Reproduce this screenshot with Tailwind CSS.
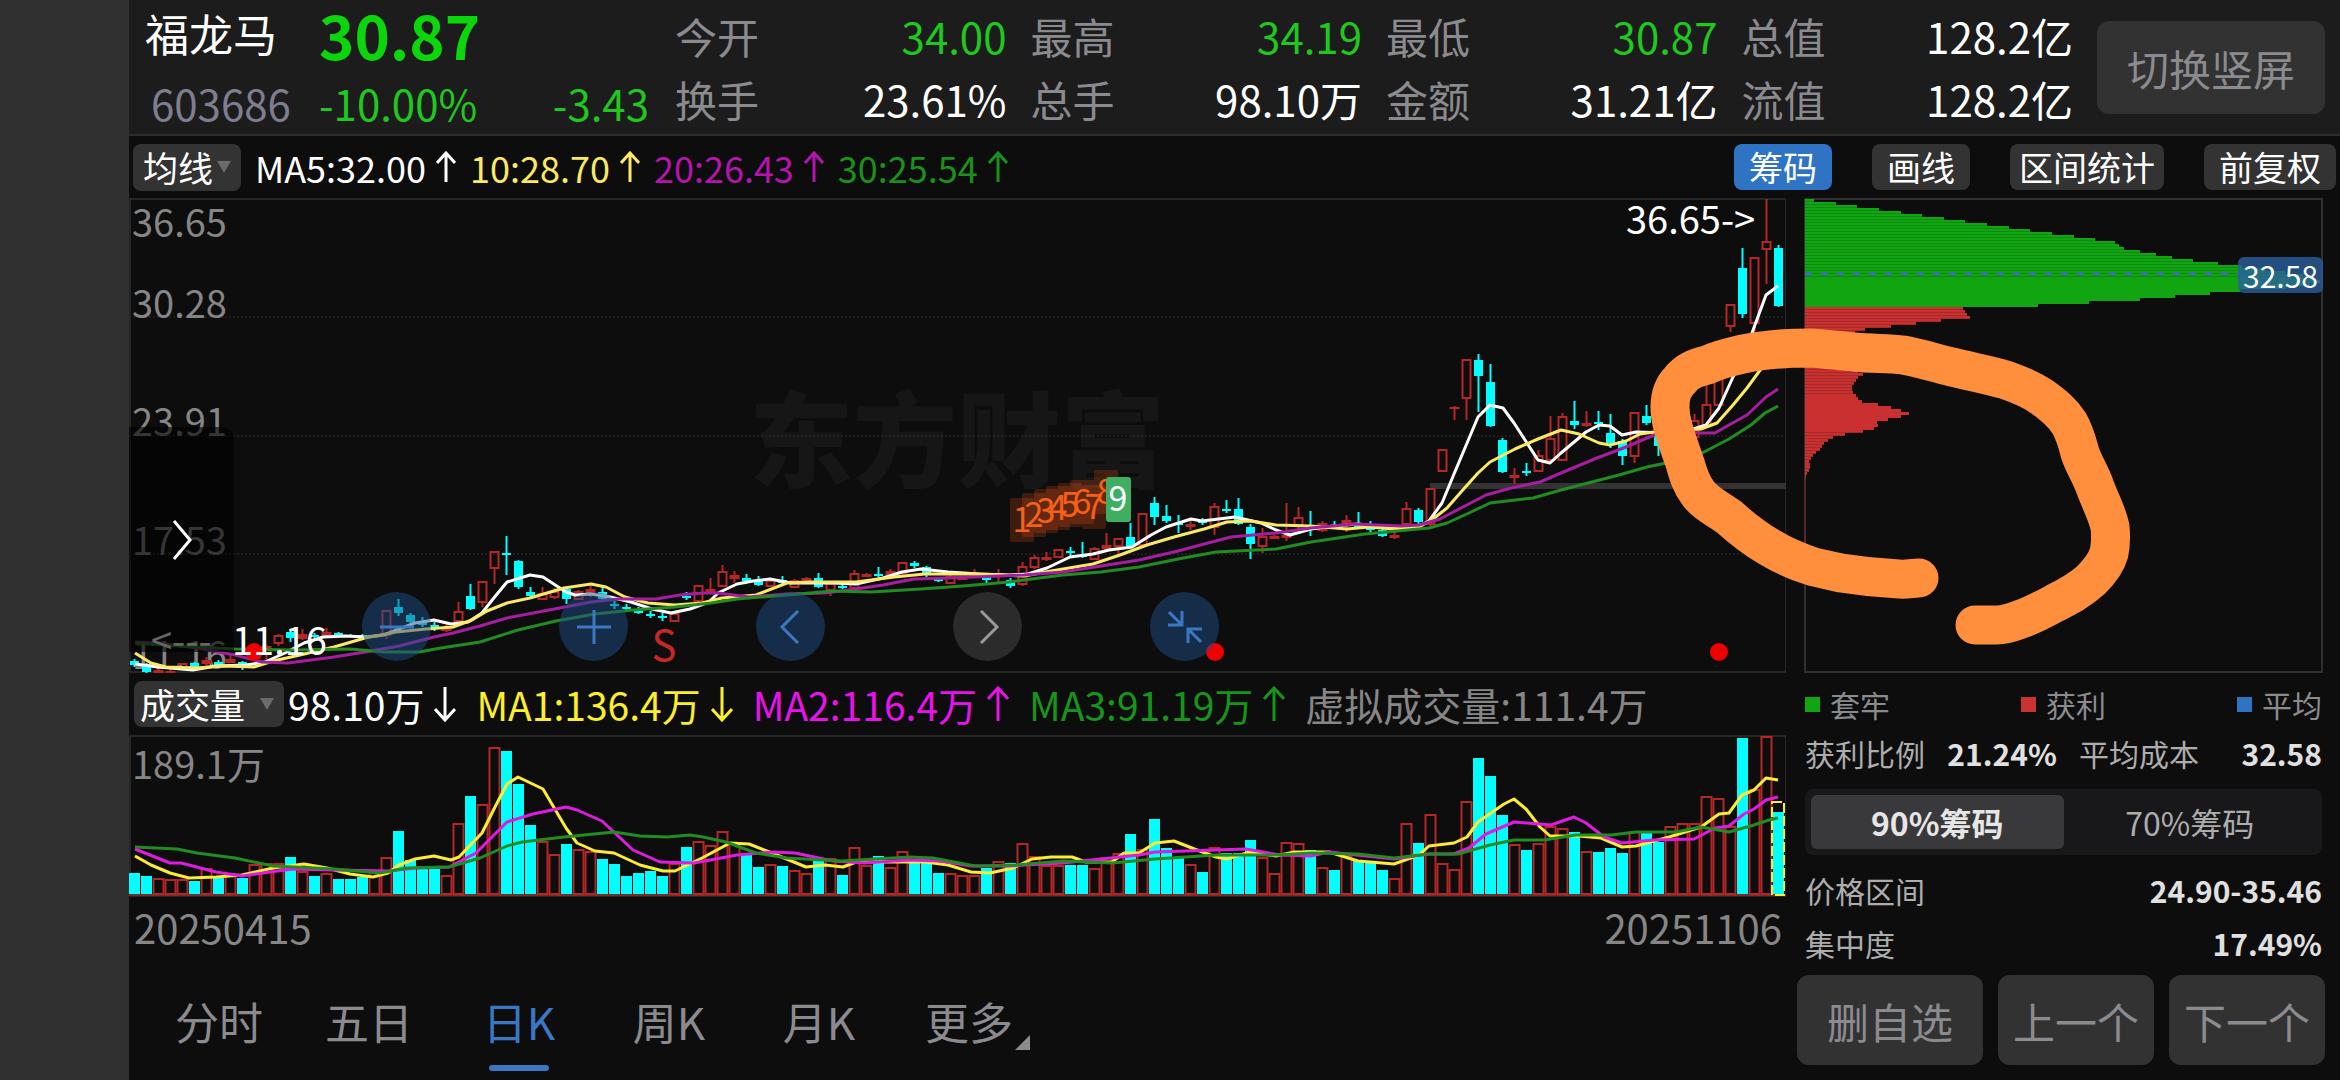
<!DOCTYPE html>
<html lang="zh-CN">
<head>
<meta charset="utf-8">
<meta name="viewport" content="width=device-width, initial-scale=1">
<title>福龙马 603686</title>
<script src="https://cdn.jsdelivr.net/npm/@tailwindcss/browser@4"></script>
</head>
<body class="bg-[#0d0d0d] font-['Noto_Sans_CJK_SC',sans-serif] text-white">
<div class="flex min-h-screen">
  <aside class="w-[129px] shrink-0 bg-[#303030]"></aside>
  <div class="flex min-w-0 flex-1 flex-col">

    <header class="flex h-[136px] items-center border-b-2 border-[#2c2c2c] bg-[#1c1c1c] pr-[15px] pl-4 whitespace-nowrap">
      <div class="grid w-[504px] shrink-0 grid-cols-[174px_1fr_auto] gap-y-1">
        <h1 class="text-[44px] leading-[66px]">福龙马</h1>
        <strong class="col-span-2 text-[60px] leading-[68px] font-bold text-[#0bd60b]">30.87</strong>
        <span class="pl-1.5 text-[42px] leading-[62px] text-[#7e7e90]">603686</span>
        <span class="text-[42px] leading-[62px] text-[#1fc71f]">-10.00%</span>
        <span class="text-[42px] leading-[62px] text-[#1fc71f]">-3.43</span>
      </div>
      <dl class="ml-[26px] grid flex-1 grid-cols-4 gap-x-6 text-[42px] leading-[63px]">
        <div class="flex justify-between"><dt class="text-[#8b8b8f]">今开</dt><dd class="text-[#1fc71f]">34.00</dd></div>
        <div class="flex justify-between"><dt class="text-[#8b8b8f]">最高</dt><dd class="text-[#1fc71f]">34.19</dd></div>
        <div class="flex justify-between"><dt class="text-[#8b8b8f]">最低</dt><dd class="text-[#1fc71f]">30.87</dd></div>
        <div class="flex justify-between"><dt class="text-[#8b8b8f]">总值</dt><dd>128.2亿</dd></div>
        <div class="flex justify-between"><dt class="text-[#8b8b8f]">换手</dt><dd>23.61%</dd></div>
        <div class="flex justify-between"><dt class="text-[#8b8b8f]">总手</dt><dd>98.10万</dd></div>
        <div class="flex justify-between"><dt class="text-[#8b8b8f]">金额</dt><dd>31.21亿</dd></div>
        <div class="flex justify-between"><dt class="text-[#8b8b8f]">流值</dt><dd>128.2亿</dd></div>
      </dl>
      <button class="ml-6 h-[93px] w-[228px] shrink-0 rounded-xl bg-[#323232] text-[42px] text-[#8b8b8f]">切换竖屏</button>
    </header>

    <div class="flex h-[62px] items-center pr-1 pl-1 text-[36px] leading-[46px] whitespace-nowrap">
      <button class="flex h-[47px] w-[108px] items-center gap-1 rounded-lg bg-[#333] pl-2.5 text-[35px]">均线
        <svg class="h-3 w-3.5 shrink-0" viewBox="0 0 14 12"><path d="M0 0h14L7 12z" fill="#6a6a6a"/></svg></button>
      <ul class="ml-3.5 flex gap-3.5">
        <li class="flex items-center gap-2.5">MA5:32.00<svg class="h-8 w-5" viewBox="0 0 20 32" fill="none" stroke="currentColor" stroke-width="3"><path d="M10 31V3M1 12l9-10 9 10"/></svg></li>
        <li class="flex items-center gap-2.5 text-[#fbe965]">10:28.70<svg class="h-8 w-5" viewBox="0 0 20 32" fill="none" stroke="currentColor" stroke-width="3"><path d="M10 31V3M1 12l9-10 9 10"/></svg></li>
        <li class="flex items-center gap-2.5 text-[#b514ad]">20:26.43<svg class="h-8 w-5" viewBox="0 0 20 32" fill="none" stroke="currentColor" stroke-width="3"><path d="M10 31V3M1 12l9-10 9 10"/></svg></li>
        <li class="flex items-center gap-2.5 text-[#1b901b]">30:25.54<svg class="h-8 w-5" viewBox="0 0 20 32" fill="none" stroke="currentColor" stroke-width="3"><path d="M10 31V3M1 12l9-10 9 10"/></svg></li>
      </ul>
      <div class="ml-auto flex gap-10 text-[34px] leading-[46px]">
        <button class="rounded-lg bg-[#2f74c4] px-[15px]">筹码</button>
        <button class="rounded-lg bg-[#333] px-[15px]">画线</button>
        <button class="rounded-lg bg-[#333] px-[9px]">区间统计</button>
        <button class="rounded-lg bg-[#333] px-[15px]">前复权</button>
      </div>
    </div>

    <div class="relative flex flex-1">
      <main class="min-w-0 flex-1">
        <section class="relative">
          <svg id="price" class="block h-[475px] w-full" aria-label="日K"></svg>
          <button class="absolute top-[229px] left-0 flex h-[225px] w-[105px] items-center justify-center rounded-tr-xl bg-black/60" aria-label="展开">
            <svg class="h-[42px] w-5" viewBox="0 0 20 42" fill="none" stroke="#fff" stroke-width="3"><path d="M2 2l16 19L2 40"/></svg>
          </button>
          <div class="absolute top-[394px] left-[233px] flex gap-32">
            <button class="flex size-[69px] items-center justify-center rounded-full bg-[#1f4d86]/50" aria-label="缩小"><svg class="size-9" viewBox="0 0 36 36" stroke="#3a78c4" stroke-width="3"><path d="M1 18h34"/></svg></button>
            <button class="flex size-[69px] items-center justify-center rounded-full bg-[#1f4d86]/50" aria-label="放大"><svg class="size-9" viewBox="0 0 36 36" stroke="#3a78c4" stroke-width="3"><path d="M1 18h34M18 1v34"/></svg></button>
            <button class="flex size-[69px] items-center justify-center rounded-full bg-[#1f4d86]/50" aria-label="左移"><svg class="size-9" viewBox="0 0 36 36" fill="none" stroke="#3a78c4" stroke-width="3"><path d="M25 2L9 18l16 16"/></svg></button>
            <button class="flex size-[69px] items-center justify-center rounded-full bg-[#2b2b2b]" aria-label="右移"><svg class="size-9" viewBox="0 0 36 36" fill="none" stroke="#999" stroke-width="3"><path d="M11 2l16 16-16 16"/></svg></button>
            <button class="flex size-[69px] items-center justify-center rounded-full bg-[#1f4d86]/50" aria-label="收起"><svg class="size-9" viewBox="0 0 36 36" fill="none" stroke="#3a78c4" stroke-width="3"><path d="M2 3l13 13M15 2v14H1M34 33L21 20M21 34V20h14"/></svg></button>
          </div>
        </section>

        <div class="flex h-[62px] items-center pl-[5px] text-[39px] leading-[46px] whitespace-nowrap">
          <button class="flex h-[46px] w-[150px] items-center justify-between rounded-lg bg-[#333] pr-2.5 pl-1.5 text-[35px]">成交量
            <svg class="h-3 w-3.5 shrink-0" viewBox="0 0 14 12"><path d="M0 0h14L7 12z" fill="#6a6a6a"/></svg></button>
          <ul class="ml-1 flex gap-5">
            <li class="flex items-center gap-2.5">98.10万<svg class="h-9 w-[22px]" viewBox="0 0 22 36" fill="none" stroke="currentColor" stroke-width="3"><path d="M11 1v32M1 23l10 11 10-11"/></svg></li>
            <li class="flex items-center gap-2.5 text-[#fbee2d]">MA1:136.4万<svg class="h-9 w-[22px]" viewBox="0 0 22 36" fill="none" stroke="currentColor" stroke-width="3"><path d="M11 1v32M1 23l10 11 10-11"/></svg></li>
            <li class="flex items-center gap-2.5 text-[#ea12ea]">MA2:116.4万<svg class="h-9 w-[22px]" viewBox="0 0 22 36" fill="none" stroke="currentColor" stroke-width="3"><path d="M11 35V3M1 13L11 2l10 11"/></svg></li>
            <li class="flex items-center gap-2.5 text-[#17951a]">MA3:91.19万<svg class="h-9 w-[22px]" viewBox="0 0 22 36" fill="none" stroke="currentColor" stroke-width="3"><path d="M11 35V3M1 13L11 2l10 11"/></svg></li>
            <li class="text-[#868686]">虚拟成交量:111.4万</li>
          </ul>
        </div>

        <svg id="volume" class="block h-[162px] w-full" aria-label="成交量"></svg>

        <div class="flex h-[60px] items-center justify-between pr-1 pl-[5px] text-[40px] text-[#868686]">
          <time>20250415</time><time>20251106</time>
        </div>

        <nav class="flex h-[123px] pl-[15px] text-[44px] leading-[66px] text-[#8b8b8f]">
          <a href="#" class="flex w-[150px] justify-center pt-[31px]">分时</a>
          <a href="#" class="flex w-[150px] justify-center pt-[31px]">五日</a>
          <a href="#" class="flex w-[150px] flex-col items-center pt-[31px] text-[#3a78c4]" aria-current="page">日K<span class="mt-[11px] h-1.5 w-[60px] rounded-full bg-[#3a78c4]"></span></a>
          <a href="#" class="flex w-[150px] justify-center pt-[31px]">周K</a>
          <a href="#" class="flex w-[150px] justify-center pt-[31px]">月K</a>
          <a href="#" class="relative flex w-[150px] justify-center pt-[31px]">更多<svg class="absolute right-3.5 bottom-[30px] size-[15px]" viewBox="0 0 15 15"><path d="M15 0v15H0z" fill="#8b8b8f"/></svg></a>
        </nav>
      </main>

      <aside class="flex w-[554px] shrink-0 flex-col text-[30px] text-[#adadad]">
        <div class="relative mr-[17px] ml-[18px]">
          <svg id="chips" class="block h-[475px] w-full" aria-label="筹码分布"></svg>
          <span class="absolute top-[59px] right-0 rounded-md bg-[#2a5f9e]/80 px-[5px] text-[30px] leading-9 text-white">32.58</span>
        </div>
        <div class="flex h-[62px] items-center justify-between pr-[18px] pl-[19px] text-[#8b8b8f]">
          <span class="flex items-center gap-2.5"><i class="size-[15px] bg-[#11a611]"></i>套牢</span>
          <span class="flex items-center gap-2.5"><i class="size-[15px] bg-[#cb3232]"></i>获利</span>
          <span class="flex items-center gap-2.5"><i class="size-[15px] bg-[#2f74c4]"></i>平均</span>
        </div>
        <div class="flex h-9 items-center justify-between pr-[18px] pl-[19px]">
          <span>获利比例</span><b class="font-bold text-[#e0e0e0]">21.24%</b><span>平均成本</span><b class="ml-5 font-bold text-[#e0e0e0]">32.58</b>
        </div>
        <div class="mt-[18px] mr-[18px] ml-[19px] grid grid-cols-2 rounded-lg bg-[#18181a] p-1.5 text-[32px] leading-[54px]">
          <button class="rounded-md bg-[#39393b] font-bold text-[#e6e6e6]">90%筹码</button>
          <button>70%筹码</button>
        </div>
        <div class="mt-[9px] flex h-[53px] items-center justify-between pr-[18px] pl-[19px]"><span>价格区间</span><b class="font-bold text-[#e0e0e0]">24.90-35.46</b></div>
        <div class="flex h-[53px] items-center justify-between pr-[18px] pl-[19px]"><span>集中度</span><b class="font-bold text-[#e0e0e0]">17.49%</b></div>
        <div class="mt-[5px] grid h-[90px] grid-cols-[186px_1fr_1fr] gap-[15px] pr-[15px] pl-[11px] text-[42px] text-[#8b8b8f]">
          <button class="rounded-xl bg-[#323232]">删自选</button>
          <button class="rounded-xl bg-[#323232]">上一个</button>
          <button class="rounded-xl bg-[#323232]">下一个</button>
        </div>
      </aside>

      <svg class="pointer-events-none absolute top-0 right-0 h-[475px] w-[740px]" viewBox="1600 198 740 475" fill="none" stroke="#ff8f3c" stroke-width="39" stroke-linecap="round" stroke-linejoin="round">
        <path d="M1919 578C1912 578 1906 580 1899 579C1878 578 1860 576 1841 573C1830 571 1824 569 1814 567C1798 562 1784 556 1769 547C1752 537 1740 527 1729 517C1716 508 1705 503 1698 493C1691 484 1688 474 1685 463C1680 449 1676 438 1673 427C1671 420 1670 414 1670 407C1670 396 1672 388 1680 380C1687 371 1695 368 1707 365C1720 359 1730 357 1743 354C1766 349 1788 348 1810 348C1826 349 1840 351 1854 352C1872 354 1888 353 1903 355C1920 358 1935 363 1952 367C1972 372 1990 375 2006 380C2020 385 2032 390 2042 397C2053 405 2062 412 2069 423C2075 433 2077 442 2080 453C2084 465 2091 475 2095 487C2101 503 2107 513 2110 527C2111 537 2111 544 2109 553C2106 564 2099 572 2091 580C2079 591 2067 597 2055 603C2044 609 2035 614 2024 618C2015 621 2008 625 1997 625H1975"/>
      </svg>
    </div>
  </div>
</div>

<script>
const UP = '#b52626', DOWN = '#00ffff';
const FONT = "'Noto Sans CJK SC',sans-serif";

// direction, high, open/close top, open/close bottom, low; one entry per trading day
const candles = [
['c',659,661,665,667],['c',663,664,672,673],['r',669,670,672,673],['r',669,671,672,673],['r',663,664,669,670],['c',662,663,667,668],['r',657,660,663,666],['c',660,662,665,667],['r',655,659,662,663],['c',661,662,668,670],
['r',650,652,657,658],['r',645,647,653,660],['r',634,636,643,646],['c',630,632,638,642],['r',629,634,638,640],['c',633,635,637,638],['r',628,632,635,637],['c',632,633,635,636],['c',634,635,636,637],['c',634,635,637,638],
['r',634,635,637,638],['r',610,611,635,639],['c',599,607,613,616],['c',613,615,622,624],['c',617,621,625,627],['c',622,625,629,631],['r',622,627,630,632],['r',602,612,621,625],['c',584,596,609,610],['r',581,582,602,607],
['r',551,552,568,584],['c',536,553,555,575],['c',560,561,587,589],['c',587,592,596,598],['r',587,594,599,600],['r',588,592,597,599],['c',587,589,599,604],['r',590,592,599,600],['r',586,589,592,597],['c',585,592,599,601],
['c',601,604,606,609],['c',604,607,609,611],['c',607,609,613,614],['c',611,614,616,618],['c',613,616,618,621],['r',613,614,621,622],['c',592,596,598,600],['r',585,586,601,602],['r',578,589,592,593],['r',565,572,586,587],
['r',571,575,578,583],['c',574,578,581,583],['c',576,580,585,586],['r',580,581,586,587],['c',576,580,583,584],['r',579,581,587,588],['r',577,578,580,583],['c',573,578,587,588],['r',583,584,590,596],['c',583,586,588,589],
['r',570,574,588,589],['r',573,574,576,577],['c',567,574,575,577],['r',569,571,574,576],['r',562,563,573,575],['c',561,563,566,568],['c',566,567,575,577],['c',577,579,581,582],['r',575,577,583,584],['r',576,577,579,580],
['r',569,573,575,576],['c',575,577,580,583],['r',569,573,576,582],['c',578,580,586,588],['r',562,567,584,586],['r',555,558,567,569],['r',552,557,559,561],['r',549,550,557,558],['c',547,551,553,556],['c',542,555,557,558],
['r',547,549,559,560],['r',533,545,548,552],['r',538,539,546,556],['c',523,537,546,547],['r',513,514,545,546],['c',497,503,517,525],['c',505,516,521,523],['c',515,523,525,533],['r',520,524,526,530],['c',518,521,522,525],
['r',503,507,527,535],['c',500,509,511,513],['c',498,509,524,525],['c',524,527,544,559],['r',528,537,546,553],['r',535,536,538,539],['r',503,535,537,541],['r',507,518,525,532],['c',511,526,528,536],['r',521,524,530,532],
['c',521,525,526,528],['r',515,520,522,532],['c',512,525,526,528],['c',521,528,530,532],['c',528,530,536,537],['r',532,535,537,539],['r',502,509,524,525],['c',508,510,522,524],['r',488,489,524,526],['r',449,450,471,472],
['r',406,407,408,420],['r',359,360,398,420],['c',354,360,376,412],['c',364,382,426,427],['c',438,440,472,473],['r',468,475,477,484],['c',463,471,473,476],['r',450,456,471,472],['r',416,439,460,461],['r',413,417,460,461],
['c',401,421,425,429],['r',411,423,425,427],['c',411,422,424,430],['c',414,433,443,448],['c',439,441,456,465],['r',412,413,456,463],['c',405,416,423,425],['c',426,430,446,456],['r',421,425,446,450],['r',424,428,439,446],
['r',414,421,437,439],['r',385,405,426,428],['r',366,370,405,406],['r',304,305,326,332],['c',248,268,314,318],['r',257,258,323,335],['r',199,242,249,284],['c',245,248,306,307]];

// bar heights in px, same order as the candles
const volumes = [21,18,16,15,15,13,26,16,21,16,30,31,31,37,23,18,21,15,15,17,23,37,63,34,26,25,19,71,98,90,147,143,110,69,53,40,50,45,43,35,30,18,21,23,18,31,47,53,49,63,51,39,27,30,28,24,21,36,36,19,47,29,38,27,43,31,32,21,21,19,19,26,33,31,51,38,29,29,29,29,26,37,41,60,45,75,46,36,30,22,47,41,41,54,37,21,52,51,44,27,24,39,33,33,24,16,71,51,80,31,25,93,136,118,79,50,44,51,68,66,62,43,42,46,41,63,61,52,68,71,71,98,96,68,156,105,158,82];

const maPrice = {
'#ffffff': '135,664 158,667 193,670 216,666 246,665 265,662 285,653 304,643 323,637 346,636 365,637 384,635 399,629 415,623 434,620 451,624 468,622 482,613 493,599 507,582 530,575 543,577 566,592 575,595 591,594 610,597 631,602 652,609 671,613 690,609 709,602 718,593 737,584 753,581 770,579 791,583 814,583 833,583 856,584 883,578 902,572 921,569 948,572 979,574 1009,575 1028,574 1047,568 1070,557 1093,554 1109,550 1132,547 1151,535 1166,527 1191,519 1202,521 1235,517 1261,523 1276,530 1290,535 1311,529 1333,526 1358,524 1394,528 1419,526 1429,521 1442,503 1454,474 1478,417 1490,405 1503,408 1514,423 1538,460 1550,463 1561,453 1586,432 1599,425 1610,426 1622,435 1636,432 1669,433 1690,430 1706,425 1719,408 1733,377 1744,357 1752,333 1766,295 1778,286',
'#fbe967': '135,653 151,663 166,667 197,668 223,666 254,667 273,661 300,655 334,647 365,638 396,632 426,629 453,627 472,620 487,611 507,603 530,598 564,588 591,584 606,587 625,597 648,603 675,605 702,603 722,598 756,595 787,583 810,582 856,582 894,577 925,574 979,574 1024,576 1051,571 1093,564 1120,555 1147,545 1174,537 1204,529 1227,522 1251,521 1276,525 1311,526 1347,529 1369,527 1394,529 1419,527 1433,519 1447,508 1461,492 1478,473 1490,462 1515,449 1538,439 1561,430 1579,434 1599,443 1610,445 1626,441 1640,434 1661,431 1701,429 1717,423 1733,405 1747,388 1758,373 1775,350',
'#a51ea0': '135,642 158,643 197,648 235,655 262,662 288,663 334,657 365,652 399,646 434,637 453,633 480,626 507,618 549,610 591,602 618,599 656,599 680,595 702,593 718,593 749,597 787,594 825,593 856,589 883,585 914,579 948,578 1024,575 1063,572 1101,566 1139,560 1178,551 1208,543 1231,537 1276,533 1311,528 1354,524 1401,526 1419,525 1440,519 1461,508 1486,495 1511,488 1540,482 1561,473 1597,458 1626,447 1654,435 1679,431 1701,433 1715,433 1729,425 1747,415 1766,397 1778,389',
'#228b22': '135,643 177,646 235,649 292,650 350,649 384,652 419,652 441,648 480,642 518,630 556,621 595,614 633,610 675,607 711,603 737,599 787,595 833,591 871,592 921,589 963,586 1009,582 1063,575 1101,572 1139,567 1178,559 1216,552 1276,549 1311,542 1365,534 1429,528 1447,523 1469,513 1490,503 1533,498 1561,490 1619,475 1647,467 1676,461 1704,452 1729,439 1751,425 1765,413 1778,406'};
const maVolume = {
'#fdec35': '135,856 151,865 170,873 189,878 216,877 242,875 273,868 304,864 327,868 350,874 373,877 388,873 399,865 415,859 434,856 451,860 459,857 482,833 495,807 507,784 518,777 543,789 566,828 577,843 595,851 614,853 640,865 663,871 675,871 702,858 730,843 749,844 772,853 806,867 825,865 843,867 856,862 894,862 925,862 948,865 971,872 990,873 1013,868 1032,859 1051,857 1072,857 1086,862 1112,862 1124,853 1139,853 1155,843 1174,841 1197,850 1216,857 1227,859 1250,852 1276,856 1294,852 1329,852 1358,861 1394,864 1419,855 1429,846 1454,843 1467,837 1478,822 1504,804 1514,799 1526,809 1540,827 1550,836 1579,836 1601,838 1622,847 1636,846 1669,837 1701,827 1719,814 1729,813 1742,795 1754,790 1766,778 1778,780',
'#e01be0': '135,849 170,863 181,863 216,872 242,876 292,869 334,870 388,871 415,868 449,867 476,853 507,822 533,814 566,807 577,810 602,821 633,850 660,862 694,863 737,855 772,852 795,853 833,861 864,863 910,860 940,861 971,866 1009,866 1063,863 1101,859 1139,855 1155,852 1246,849 1280,855 1311,856 1329,852 1394,859 1429,854 1454,854 1469,848 1486,834 1514,822 1551,825 1574,817 1586,823 1604,837 1622,843 1654,840 1694,839 1715,828 1729,826 1744,814 1754,809 1766,800 1778,797',
'#228b22': '135,847 177,849 197,853 235,858 273,866 334,869 380,873 407,868 449,867 480,858 507,846 522,842 564,837 614,832 640,836 667,837 690,835 703,837 726,842 756,853 787,858 841,861 910,857 933,858 975,866 1017,865 1063,861 1112,863 1155,859 1216,855 1276,855 1312,853 1358,854 1394,858 1429,854 1458,854 1490,845 1514,840 1544,840 1576,835 1611,835 1636,832 1676,832 1701,827 1729,832 1754,825 1769,820 1778,818'};

// width of each price level in the chip distribution, top to bottom, 3px a row
const locked = [9,31,52,74,96,117,139,160,182,204,225,247,269,290,310,314,319,335,351,367,388,413,437,460,480,498,508,515,505,482,435,405,370,335,284,233,182];
const profit = [158,160,162,165,136,111,86,60,50,48,46,45,42,40,38,36,35,34,36,39,46,53,58,53,51,49,47,47,48,51,53,57,73,86,96,104,96,83,72,73,69,58,40,28,23,19,17,15,11,8,6,4,5,5,4,2,1];

const line = (x1,y1,x2,y2,c,w=2,extra='') => `<line x1="${x1}" y1="${y1}" x2="${x2}" y2="${y2}" stroke="${c}" stroke-width="${w}" ${extra}/>`;
const rect = (x,y,w,h,fill,extra='') => `<rect x="${x}" y="${y}" width="${w}" height="${h}" fill="${fill}" ${extra}/>`;
const text = (x,y,s,size,fill,extra='') => `<text x="${x}" y="${y}" font-size="${size}" fill="${fill}" ${extra}>${s}</text>`;

function series(map, X) {
  return Object.entries(map).map(([c, pts]) =>
    `<polyline fill="none" stroke="${c}" stroke-width="3" stroke-linejoin="round" points="${pts.split(' ').map(p => { const [x, y] = p.split(','); return X(+x) + ',' + y; }).join(' ')}"/>`).join('');
}

function drawPrice(el, w) {
  const X = v => 129 + (v - 129) * w / 1657, R = 129 + w;
  el.setAttribute('viewBox', `129 198 ${w} 475`);
  let s = text(X(957), 480, '东方财富', 104, '#161616', 'font-weight="900" text-anchor="middle"');
  s += rect(130, 199, w - 1, 473, 'none', 'stroke="#262626" stroke-width="2"');
  [317, 436, 554].forEach(y => s += line(129, y, R, y, '#333', 1, 'stroke-dasharray="2 2"'));
  [['36.65',237],['30.28',318],['23.91',436],['17.53',555],['11.16',669]].forEach(([t,y]) => s += text(132, y, t, 38, '#868686'));
  s += rect(X(1430), 483, R - X(1430), 6, '#333');
  candles.forEach(([d, hi, a, b, lo], i) => {
    const x = X(134.5 + 12 * i), c = d === 'c' ? DOWN : UP;
    if (d === 'c') s += line(x, hi, x, lo, c) + rect(x - 4.5, a, 9, Math.max(b - a, 2), c);
    else {
      s += line(x, hi, x, a, c) + line(x, b, x, lo, c);
      s += b - a < 5 ? rect(x - 5, a, 10, b - a + 1, c) : rect(x - 4, a, 8, b - a, 'none', `stroke="${c}" stroke-width="2"`);
    }
  });
  s += series(maPrice, X);
  s += text(X(1626), 234, '36.65-&gt;', 38, '#fff');
  [520,515,511,508,505,502,507,492].forEach((y, i) => {
    const x = X(1022 + 12 * i);
    s += rect(x - 12, y - 22, 24, 44, '#ff5a14', 'fill-opacity=".2" rx="2"') + text(x, y + 12, i + 1, 34, '#f4611a', 'text-anchor="middle"');
  });
  s += rect(X(1118) - 12, 477, 25, 45, '#3dae62', 'rx="3"') + text(X(1118), 511, 9, 34, '#fff', 'text-anchor="middle"');
  s += text(X(151), 655, '&lt;---', 38, '#fff');
  [[254,652],[1215,652],[1719,652]].forEach(([x,y]) => s += `<circle cx="${X(x)}" cy="${y}" r="9" fill="#f00000"/>`);
  s += text(X(232), 655, '11.16', 38, '#fff') + text(X(664), 661, 'S', 42, '#c62828', 'text-anchor="middle"');
  el.innerHTML = s;
}

function drawVolume(el, w) {
  const X = v => 129 + (v - 129) * w / 1657;
  el.setAttribute('viewBox', `129 735 ${w} 162`);
  let s = rect(130, 736, w - 1, 160, 'none', 'stroke="#262626" stroke-width="2"');
  s += text(132, 779, '189.1万', 38, '#868686');
  s += line(129, 895, 129 + w, 895, '#7a2a2a', 2);
  volumes.forEach((h, i) => {
    const x = X(134.5 + 12 * i);
    s += candles[i][0] === 'c' ? rect(x - 5.5, 894 - h, 11, h, DOWN) : rect(x - 5, 895 - h, 10, h - 1, '#0d0d0d', `stroke="${UP}" stroke-width="2"`);
  });
  s += rect(X(1778) - 6, 802, 12, 93, 'none', 'stroke="#fdec35" stroke-width="2" stroke-dasharray="10 3"');
  s += series(maVolume, X);
  el.innerHTML = s;
}

function drawChips(el, w) {
  const k = w / 519;
  el.setAttribute('viewBox', `0 198 ${w} 475`);
  let s = rect(1, 199, w - 2, 473, 'none', 'stroke="#303030" stroke-width="2"'), y = 199;
  const bars = (rows, c, dark, solid) => rows.forEach((v, i) => {
    s += rect(1, y, v * k, 3, c);
    if (!solid(i)) s += rect(1, y + 2, v * k, 1, dark);
    y += 3;
  });
  bars(locked.slice(0, 36), '#11a611', '#0e8c12', i => i > 25);
  bars(profit, '#cb3030', '#a52a2a', i => i > 28 && i < 41);
  s += line(1, y, 1, 545, '#7a2222', 1);
  s += line(1, 274, w - 80, 274, '#2f7a8c', 4, 'stroke-dasharray="7 9"');
  el.innerHTML = s;
}

const painters = { price: drawPrice, volume: drawVolume, chips: drawChips };
const watcher = new ResizeObserver(entries => entries.forEach(e => painters[e.target.id](e.target, e.contentRect.width)));
for (const id in painters) {
  const el = document.getElementById(id);
  el.setAttribute('font-family', FONT);
  watcher.observe(el);
}
</script>
</body>
</html>
